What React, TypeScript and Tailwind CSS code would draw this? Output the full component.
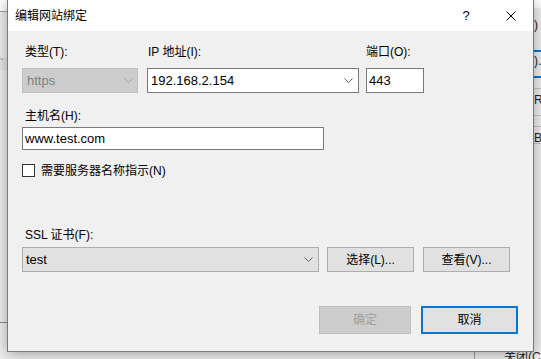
const font = { fontFamily: '"Liberation Sans", "Noto Sans CJK SC", sans-serif' }

function Chevron({ color = "#606060" }: { color?: string }) {
  return (
    <svg width="9" height="5" viewBox="0 0 9 5" className="shrink-0">
      <polyline points="0.5,0.5 4.5,4.5 8.5,0.5" fill="none" stroke={color} strokeWidth="1" />
    </svg>
  )
}

function Background() {
  return (
    <div className="absolute inset-0 bg-[#f0f0f0]">
      {/* left strip of the window behind */}
      <div className="absolute left-0 top-0 w-[8px] h-[12px] bg-white border-b border-[#a0a0a0]" />
      <div className="absolute left-0 top-[57px] w-[8px] h-[13px] bg-[#e6e6e6] text-[10px] leading-[13px] text-[#0078d7]">ˋ</div>
      <div className="absolute left-0 top-[322px] w-[8px] h-px bg-[#8a8a8a]" />
      {/* right strip of the window behind */}
      <div className="absolute right-0 top-0 w-[8px] h-[8px] bg-white" />
      <div className="absolute left-[534px] top-[18px] text-[12px] leading-[14px] text-[#1e1e1e]">)</div>
      <div className="absolute left-[534px] top-[50px] w-[8px] h-[2px] bg-[#0078d7]" />
      <div className="absolute left-[534px] top-[54px] text-[12px] leading-[14px] text-[#1e1e1e]">).</div>
      <div className="absolute left-[534px] top-[76px] w-[8px] h-[2px] bg-[#0078d7]" />
      <div className="absolute left-[534px] top-[88px] w-[8px] h-px bg-[#c8c8c8]" />
      <div className="absolute left-[534px] top-[93px] text-[12px] leading-[14px] text-[#1e1e1e]">R</div>
      <div className="absolute left-[534px] top-[115px] w-[8px] h-px bg-[#c8c8c8]" />
      <div className="absolute left-[534px] top-[126px] w-[8px] h-px bg-[#c8c8c8]" />
      <div className="absolute left-[534px] top-[131px] text-[12px] leading-[14px] text-[#1e1e1e]">B</div>
      <div className="absolute left-[534px] top-[143px] w-[8px] h-px bg-[#c8c8c8]" />
      {/* bottom strip */}
      <div className="absolute left-[474px] top-[351px] w-px h-[8px] bg-[#a0a0a0]" />
      <div className="absolute left-[504px] top-[350px] text-[12px] leading-[14px] text-[#1e1e1e]">关闭(C</div>
    </div>
  )
}

export default function App() {
  return (
    <div className="relative w-[541px] h-[359px] overflow-hidden text-[12px] text-black" style={font}>
      <Background />
      <div className="relative ml-[7px] w-[527px] h-[352px] flex flex-col border-x border-b border-[#7a7a7a] bg-[#f0f0f0] shadow-[0_2px_14px_rgba(0,0,0,0.35)]">
        {/* title bar */}
        <div className="h-[31px] bg-white flex items-center shrink-0">
          <span className="ml-[7px] leading-none">编辑网站绑定</span>
          <span className="ml-auto w-[14px] text-center text-[13px] leading-none">?</span>
          <svg width="10" height="10" viewBox="0 0 10 10" className="ml-[33px] mr-[17px]">
            <line x1="0.5" y1="0.5" x2="9.5" y2="9.5" stroke="#000" strokeWidth="1" />
            <line x1="9.5" y1="0.5" x2="0.5" y2="9.5" stroke="#000" strokeWidth="1" />
          </svg>
        </div>

        {/* body */}
        <div className="flex flex-col pl-[14px] pt-[13px]">
          <div className="flex">
            <div className="flex flex-col w-[116px]">
              <span className="h-[16px] leading-[16px] pl-[3px]">类型(T):</span>
              <div className="mt-[8px] h-[25px] flex items-center justify-between px-[4px] bg-[#cccccc] border border-[#bfbfbf] text-[#838383]">
                <span className="text-[13px]">https</span>
                <Chevron color="#a8a8a8" />
              </div>
            </div>
            <div className="flex flex-col w-[212px] ml-[9px]">
              <span className="h-[16px] leading-[16px] pl-[1px]">IP 地址(I):</span>
              <div className="mt-[8px] h-[25px] flex items-center justify-between pl-[3px] pr-[5px] bg-white border border-[#7a7a7a]">
                <span className="text-[13px]">192.168.2.154</span>
                <Chevron />
              </div>
            </div>
            <div className="flex flex-col w-[58px] ml-[7px]">
              <span className="h-[16px] leading-[16px]">端口(O):</span>
              <div className="mt-[8px] h-[25px] flex items-center pl-[2px] bg-white border border-[#7a7a7a]">
                <span className="text-[13px]">443</span>
              </div>
            </div>
          </div>

          <span className="mt-[15px] h-[16px] leading-[16px] pl-[3px]">主机名(H):</span>
          <div className="mt-[3px] w-[302px] h-[23px] flex items-center pl-[2px] bg-white border border-[#7a7a7a]">
            <span className="text-[13px]">www.test.com</span>
          </div>

          <label className="mt-[14px] flex items-center h-[13px]">
            <span className="w-[13px] h-[13px] bg-white border border-[#333333]" />
            <span className="ml-[6px] leading-none">需要服务器名称指示(N)</span>
          </label>

          <span className="mt-[50px] h-[16px] leading-[16px] pl-[3px]">SSL 证书(F):</span>
          <div className="mt-[4px] flex">
            <div className="w-[297px] h-[25px] flex items-center justify-between pl-[3px] pr-[5px] bg-[#e1e1e1] border border-[#adadad]">
              <span className="text-[13px]">test</span>
              <Chevron />
            </div>
            <button className="ml-[8px] w-[87px] h-[25px] bg-[#e1e1e1] border border-[#adadad] leading-none">选择(L)...</button>
            <button className="ml-[9px] w-[87px] h-[25px] bg-[#e1e1e1] border border-[#adadad] leading-none">查看(V)...</button>
          </div>

          <div className="mt-[34px] flex justify-end pr-[15px]">
            <button className="w-[92px] h-[28px] bg-[#cccccc] border border-[#bfbfbf] text-[#a0a0a0] leading-none">确定</button>
            <button className="ml-[10px] w-[97px] h-[28px] bg-[#e1e1e1] border-2 border-[#0078d7] leading-none">取消</button>
          </div>
        </div>
      </div>
    </div>
  )
}
